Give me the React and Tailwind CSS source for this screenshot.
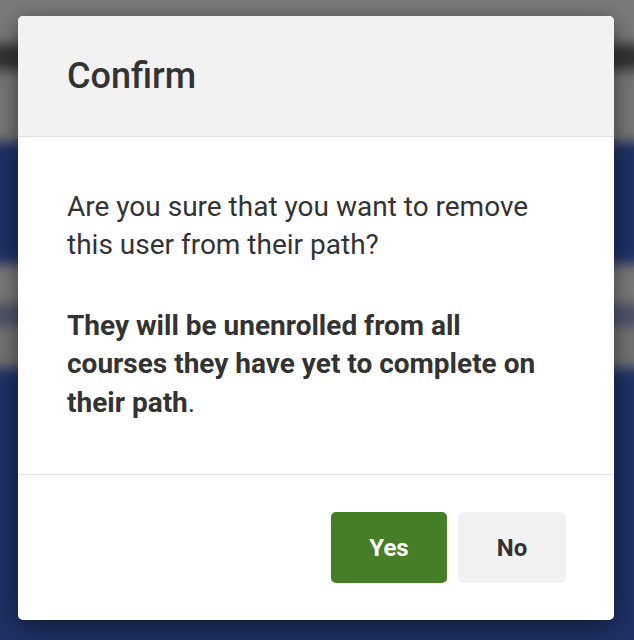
export default function App() {
  return (
    <div className="relative h-[640px] w-[634px] overflow-hidden bg-[#1e2f66]" style={{ fontFamily: 'Roboto, "Liberation Sans", sans-serif' }}>
      <div className="-mx-4 -mt-5 flex flex-col blur-[6px]">
        <div className="h-[64px] bg-[#7a7a7a]" />
        <div className="h-[26px] bg-[#333333]" />
        <div className="h-[72px] bg-[#777777]" />
        <div className="h-[122px] bg-[#1f3166]" />
        <div className="h-[40px] bg-[#7a7a7a]" />
        <div className="h-[22px] bg-[#4c5266]" />
        <div className="h-[42px] bg-[#737373]" />
        <div className="h-[290px] bg-[#1f3166]" />
      </div>
      <div className="absolute left-[18px] top-[16px] flex h-[604px] w-[596px] flex-col overflow-hidden rounded-[5px] bg-white shadow-[0_6px_24px_rgba(0,0,0,0.5)]">
        <div className="flex h-[121px] shrink-0 items-center border-b border-[#e3e3e3] bg-[#f2f2f2] px-[49px]">
          <h1 className="text-[36px] font-medium leading-none text-[#333333]">Confirm</h1>
        </div>
        <div className="flex-1 px-[49px] pt-[51px] text-[28px] leading-[38.4px] text-[#333333]">
          <p className="mb-[42px]">Are you sure that you want to remove this user from their path?</p>
          <p><strong className="font-bold">They will be unenrolled from all courses they have yet to complete on their path</strong>.</p>
        </div>
        <div className="flex h-[146px] shrink-0 items-center justify-end gap-[11px] border-t border-[#e3e3e3] px-[48px]">
          <button className="h-[71px] w-[116px] rounded-[5px] bg-[#467e27] text-[24px] font-bold text-white">Yes</button>
          <button className="h-[71px] w-[108px] rounded-[5px] bg-[#f2f2f2] text-[24px] font-bold text-[#333333]">No</button>
        </div>
      </div>
    </div>
  );
}
